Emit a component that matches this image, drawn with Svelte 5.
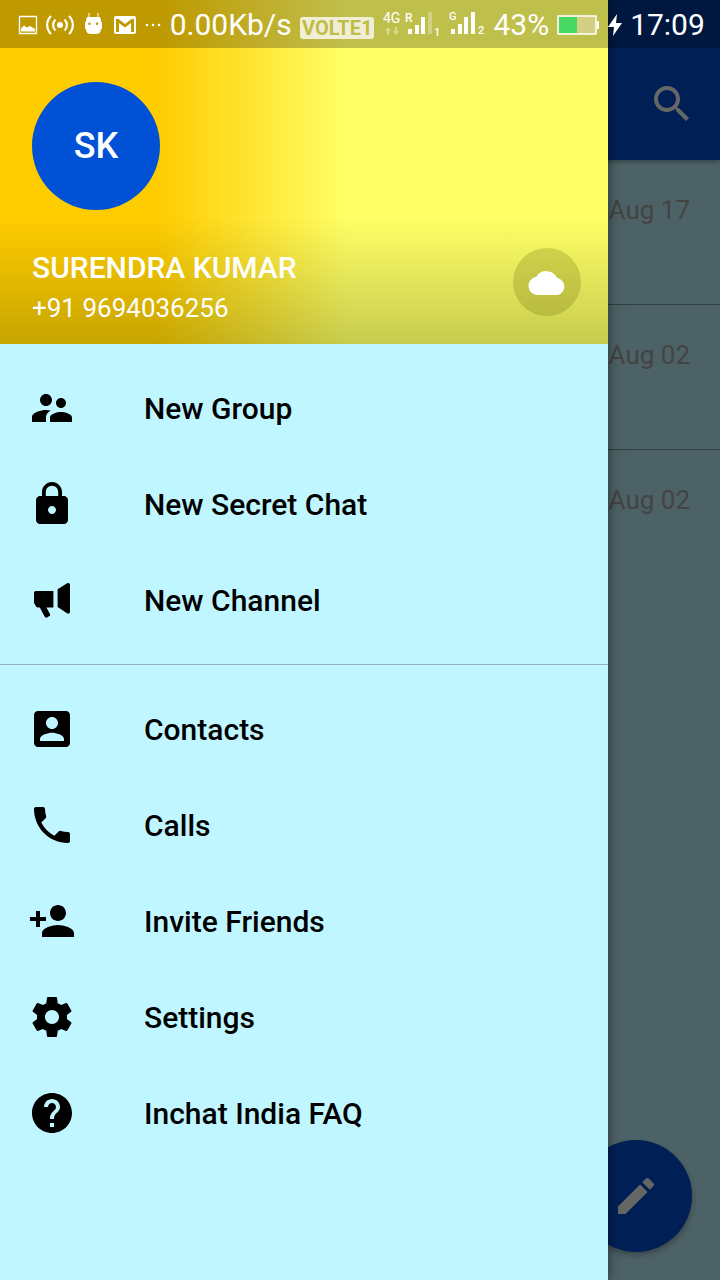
<script lang="ts">
  type MenuItem = { label: string; icon: string };

  const mainItems: MenuItem[] = [
    {
      label: 'New Group',
      icon: 'M16.5 12c1.38 0 2.49-1.12 2.49-2.5S17.88 7 16.5 7C15.12 7 14 8.12 14 9.5s1.12 2.5 2.5 2.5zM9 11c1.66 0 2.99-1.34 2.99-3S10.66 5 9 5C7.34 5 6 6.34 6 8s1.34 3 3 3zm7.5 3c-1.83 0-5.5.92-5.5 2.75V19h11v-2.25c0-1.83-3.67-2.75-5.5-2.75zM9 13c-2.33 0-7 1.17-7 3.5V19h7v-2.25c0-.85.33-2.34 2.37-3.47C10.5 13.1 9.66 13 9 13z'
    },
    {
      label: 'New Secret Chat',
      icon: 'M18 8h-1V6c0-2.76-2.24-5-5-5S7 3.24 7 6v2H6c-1.1 0-2 .9-2 2v10c0 1.1.9 2 2 2h12c1.1 0 2-.9 2-2V10c0-1.1-.9-2-2-2zm-6 9c-1.1 0-2-.9-2-2s.9-2 2-2 2 .9 2 2-.9 2-2 2zm3.1-9H8.9V6c0-1.71 1.39-3.1 3.1-3.1 1.71 0 3.1 1.39 3.1 3.1v2z'
    },
    {
      label: 'New Channel',
      icon: 'M4 7.5h8.7v8.2H9.2l1.8 3.3c.2.4.1.8-.3 1l-1.2.7c-.5.3-.9.1-1.2-.4L5.9 15.7H5c-.6 0-.9-.2-1.1-.7L3 13.5v-5c0-.6.4-1 1-1zM14.8 6.6l4.6-2.9c.8-.5 1.600-.1 1.600.7v13.500c0 .8-.8 1.200-1.500.7l-4.700-3.100z'
    }
  ];

  const moreItems: MenuItem[] = [
    {
      label: 'Contacts',
      icon: 'M3 5v14c0 1.1.89 2 2 2h14c1.1 0 2-.9 2-2V5c0-1.1-.9-2-2-2H5c-1.11 0-2 .9-2 2zm12 4c0 1.66-1.34 3-3 3s-3-1.34-3-3 1.34-3 3-3 3 1.34 3 3zm-9 8c0-2 4-3.1 6-3.1s6 1.1 6 3.1v1H6v-1z'
    },
    {
      label: 'Calls',
      icon: 'M6.62 10.79c1.44 2.83 3.76 5.14 6.59 6.59l2.2-2.2c.27-.27.67-.36 1.02-.24 1.12.37 2.33.57 3.57.57.55 0 1 .45 1 1V20c0 .55-.45 1-1 1-9.39 0-17-7.61-17-17 0-.55.45-1 1-1h3.5c.55 0 1 .45 1 1 0 1.25.2 2.45.57 3.57.11.35.03.74-.25 1.02l-2.2 2.2z'
    },
    {
      label: 'Invite Friends',
      icon: 'M15 12c2.21 0 4-1.79 4-4s-1.79-4-4-4-4 1.79-4 4 1.79 4 4 4zm-9-2V7H4v3H1v2h3v3h2v-3h3v-2H6zm9 4c-2.67 0-8 1.34-8 4v2h16v-2c0-2.66-5.33-4-8-4z'
    },
    {
      label: 'Settings',
      icon: 'M19.43 12.98c.04-.32.07-.64.07-.98s-.03-.66-.07-.98l2.11-1.65c.19-.15.24-.42.12-.64l-2-3.46c-.12-.22-.39-.3-.61-.22l-2.49 1c-.52-.4-1.08-.73-1.69-.98l-.38-2.65C14.46 2.18 14.25 2 14 2h-4c-.25 0-.46.18-.49.42l-.38 2.65c-.61.25-1.17.59-1.69.98l-2.49-1c-.23-.09-.49 0-.61.22l-2 3.46c-.13.22-.07.49.12.64l2.11 1.65c-.04.32-.07.65-.07.98s.03.66.07.98l-2.11 1.65c-.19.15-.24.42-.12.64l2 3.46c.12.22.39.3.61.22l2.49-1c.52.4 1.08.73 1.69.98l.38 2.65c.03.24.24.42.49.42h4c.25 0 .46-.18.49-.42l.38-2.65c.61-.25 1.17-.59 1.69-.98l2.49 1c.23.09.49 0 .61-.22l2-3.46c.12-.22.07-.49-.12-.64l-2.11-1.65zM12 15.5c-1.93 0-3.5-1.57-3.5-3.5s1.57-3.5 3.5-3.5 3.5 1.57 3.5 3.5-1.57 3.5-3.5 3.5z'
    },
    {
      label: 'Inchat India FAQ',
      icon: 'M12 2C6.48 2 2 6.48 2 12s4.48 10 10 10 10-4.48 10-10S17.52 2 12 2zm1 17h-2v-2h2v2zm2.07-7.75l-.9.92C13.45 12.9 13 13.5 13 15h-2v-.5c0-1.1.45-2.1 1.17-2.83l1.24-1.26c.37-.36.59-.86.59-1.41 0-1.1-.9-2-2-2s-2 .9-2 2H8c0-2.21 1.79-4 4-4s4 1.79 4 4c0 .88-.36 1.68-.93 2.25z'
    }
  ];

  const chatDates = ['Aug 17', 'Aug 02', 'Aug 02'];
</script>

{#snippet menu(items: MenuItem[])}
  <ul>
    {#each items as item}
      <li>
        <button type="button" class="menu-item">
          <svg viewBox="0 0 24 24" aria-hidden="true"><path d={item.icon} /></svg>
          <span>{item.label}</span>
        </button>
      </li>
    {/each}
  </ul>
{/snippet}

<div class="screen">
  <main class="chats">
    <header class="toolbar">
      <button type="button" class="search" aria-label="Search">
        <svg viewBox="0 0 24 24" aria-hidden="true">
          <path d="M15.5 14h-.79l-.28-.27C15.41 12.59 16 11.11 16 9.5 16 5.91 13.09 3 9.5 3S3 5.91 3 9.5 5.91 16 9.5 16c1.61 0 3.09-.59 4.23-1.57l.27.28v.79l5 4.99L20.49 19l-4.99-5zm-6 0C7.01 14 5 11.99 5 9.5S7.01 5 9.5 5 14 7.01 14 9.5 11.99 14 9.5 14z" />
        </svg>
      </button>
    </header>
    <ul class="chat-list">
      {#each chatDates as date}
        <li><time>{date}</time></li>
      {/each}
    </ul>
    <button type="button" class="compose" aria-label="New message">
      <svg viewBox="0 0 24 24" aria-hidden="true">
        <path d="M3 17.25V21h3.75L17.81 9.94l-3.75-3.75L3 17.25zM20.71 7.04c.39-.39.39-1.02 0-1.41l-2.34-2.34c-.39-.39-1.02-.39-1.41 0l-1.83 1.83 3.75 3.75 1.83-1.83z" />
      </svg>
    </button>
  </main>

  <div class="scrim"></div>

  <aside class="drawer">
    <header class="profile">
      <div class="avatar">SK</div>
      <div class="account">
        <div>
          <div class="name">SURENDRA KUMAR</div>
          <div class="phone">+91 9694036256</div>
        </div>
        <button type="button" class="cloud" aria-label="Saved messages">
          <svg viewBox="1 1 35 24" aria-hidden="true">
            <path d="M9 25a8.5 8.5 0 0 1-1.500-16.600h1A11 11 0 0 1 28 9.400 8 8 0 0 1 28.500 25z" />
          </svg>
        </button>
      </div>
    </header>
    <nav>
      {@render menu(mainItems)}
      <hr />
      {@render menu(moreItems)}
    </nav>
  </aside>

  <div class="status-bar">
    <svg width="20" height="20" viewBox="0 0 20 20" aria-hidden="true">
      <path fill="none" stroke="#fff" stroke-width="1.3" d="M1.500 1.500h17v17h-17z" />
      <path d="M3 16.500v-3l3-3 3 2 3-1.500 5 3v2.500z" />
    </svg>
    <svg width="28" height="20" viewBox="0 0 28 20" aria-hidden="true">
      <circle cx="14" cy="10" r="3" />
      <g fill="none" stroke="#fff" stroke-width="2.2">
        <path d="M9.500 4.500a7.500 7.500 0 0 0 0 11M18.500 4.500a7.500 7.500 0 0 1 0 11M5 1a12.500 12.500 0 0 0 0 18M23 1a12.500 12.500 0 0 1 0 18" />
      </g>
    </svg>
    <svg width="22" height="26" viewBox="0 0 22 26" aria-hidden="true">
      <path fill="none" stroke="#fff" d="M6 1v5M15 1v5" />
      <path fill-rule="evenodd" d="M4 5h13l1 3v2h1v7h-1q0 5-5 5H8q-5 0-5-5H2v-7h1V8zM6.500 10.500a1.300 1.300 0 1 0 0 2.600 1.300 1.300 0 0 0 0-2.600zm7.500 0a1.300 1.300 0 1 0 0 2.600 1.300 1.300 0 0 0 0-2.600z" />
    </svg>
    <svg width="24" height="20" viewBox="0 0 24 20" aria-hidden="true">
      <path fill-rule="evenodd" d="M3 1h18q2 0 2 2v14q0 2-2 2H3q-2 0-2-2V3q0-2 2-2zm0 3v13h3V8l6 4.500L18 8v9h3V4h-2.500L12 9 5.500 4z" />
    </svg>
    <svg width="16" height="4" viewBox="0 0 16 4" aria-hidden="true">
      <circle cx="2" cy="2" r="1.3" /><circle cx="8" cy="2" r="1.3" /><circle cx="14" cy="2" r="1.3" />
    </svg>
    <span class="reading">0.00Kb/s</span>
    <span class="volte">VOLTE1</span>
    <svg width="58" height="30" viewBox="0 0 58 30" aria-hidden="true">
      <text x="0" y="13" font-size="14">4G</text>
      <text x="22" y="12" font-size="12" font-weight="500">R</text>
      <path opacity=".4" d="M5 17l3 4H6v4H4v-4H2zM13 25l-3-4h2v-4h2v4h2z" />
      <path d="M25 19h4v5h-4zM32 15h4v9h-4zM38 7h4v17h-4z" />
      <path opacity=".3" d="M45 2h4v22h-4z" />
      <text x="51" y="26" font-size="11" font-weight="500">1</text>
    </svg>
    <svg width="36" height="30" viewBox="0 0 36 30" aria-hidden="true">
      <text x="0" y="10" font-size="11" font-weight="500">G</text>
      <path d="M2 19h4v5H2zM9 14h4v10H9zM15 7h4v17h-4zM22 2h4v22h-4z" />
      <text x="29" y="24" font-size="11" font-weight="500">2</text>
    </svg>
    <span class="reading">43%</span>
    <svg width="42" height="20" viewBox="0 0 42 20" aria-hidden="true">
      <path fill="#d4cf82" stroke="#fff" stroke-width="1.5" d="M1 1h38v18H1z" />
      <path fill="#48d964" d="M2 2h18v16H2z" />
      <path d="M40 6h2v8h-2z" />
    </svg>
    <svg width="14" height="24" viewBox="0 0 14 24" aria-hidden="true">
      <path d="M9 1L0 14h6L5 23 14 10H8z" />
    </svg>
    <span class="reading">17:09</span>
  </div>
</div>

<style>
  :global(body) {
    margin: 0;
    background: #c0f6ff;
    font-family: Roboto, sans-serif;
  }

  .screen {
    position: relative;
    min-height: 100vh;
    overflow: hidden;
  }

  ul {
    list-style: none;
    margin: 0;
    padding: 0;
  }

  button {
    border: 0;
    padding: 0;
    background: transparent;
    color: inherit;
    font: inherit;
    cursor: pointer;
  }

  svg {
    display: block;
    flex: none;
  }

  /* chat list behind the drawer */
  .toolbar {
    display: flex;
    align-items: center;
    justify-content: flex-end;
    height: 112px;
    padding: 48px 24px 0;
    background: #0051d5;
    box-shadow: 0 2px 4px rgba(0, 0, 0, 0.3);
  }

  .search svg,
  .compose svg {
    width: 48px;
    height: 48px;
    fill: #fff;
  }

  .chat-list li {
    height: 112px;
    padding: 32px 30px 0;
    border-bottom: 1px solid #7a9ca2;
    text-align: right;
  }

  .chat-list li:last-child {
    border-bottom: 0;
  }

  .chat-list time {
    color: #a8a8a8;
    font-size: 26px;
    line-height: 36px;
  }

  .compose {
    position: absolute;
    right: 28px;
    bottom: 28px;
    display: grid;
    place-items: center;
    width: 112px;
    height: 112px;
    border-radius: 50%;
    background: #0051d5;
    box-shadow: 0 3px 6px rgba(0, 0, 0, 0.3);
  }

  .scrim {
    position: absolute;
    inset: 0;
    background: rgba(0, 0, 0, 0.6);
  }

  .drawer {
    position: absolute;
    inset: 0 112px 0 0;
    background: #c0f6ff;
    box-shadow: 0 0 12px rgba(0, 0, 0, 0.5);
  }

  .profile {
    display: flex;
    flex-direction: column;
    justify-content: space-between;
    box-sizing: border-box;
    height: 344px;
    padding: 82px 27px 16px 32px;
    background:
      linear-gradient(rgba(20, 40, 0, 0) 63%, rgba(20, 40, 0, 0.24)),
      linear-gradient(90deg, #fc0 26%, #ff6 57%);
    color: #fff;
  }

  .avatar {
    display: grid;
    place-items: center;
    width: 128px;
    height: 128px;
    border-radius: 50%;
    background: #0051d5;
    font-size: 36px;
    font-weight: 500;
  }

  .account {
    display: flex;
    align-items: flex-start;
    justify-content: space-between;
  }

  .name {
    font-size: 30px;
    font-weight: 500;
    line-height: 40px;
  }

  .phone {
    font-size: 26px;
    line-height: 40px;
  }

  .cloud {
    display: grid;
    place-items: center;
    width: 68px;
    height: 68px;
    border-radius: 50%;
    background: rgba(90, 90, 0, 0.22);
  }

  .cloud svg {
    width: 38px;
    height: 26px;
    fill: #fff;
  }

  nav ul {
    padding: 16px 0;
  }

  .menu-item {
    display: flex;
    align-items: center;
    gap: 68px;
    width: 100%;
    height: 96px;
    padding: 0 28px;
    color: #000;
    font-size: 30px;
    font-weight: 500;
    text-align: left;
  }

  .menu-item svg {
    width: 48px;
    height: 48px;
  }

  hr {
    height: 1px;
    margin: 0;
    border: 0;
    background: #8fb3ba;
  }

  .status-bar {
    position: absolute;
    inset: 0 0 auto;
    display: flex;
    align-items: center;
    justify-content: space-between;
    box-sizing: border-box;
    height: 48px;
    padding: 2px 15px 0 18px;
    background: rgba(0, 0, 0, 0.25);
    color: #fff;
    white-space: nowrap;
  }

  .status-bar svg {
    fill: #fff;
  }

  .reading {
    font-size: 30px;
    line-height: 46px;
  }

  .volte {
    margin-top: 6px;
    padding: 0 2px;
    border-radius: 3px;
    background: #f0efd5;
    color: #bfbd48;
    font-size: 20px;
    font-weight: 700;
    line-height: 22px;
  }
</style>
